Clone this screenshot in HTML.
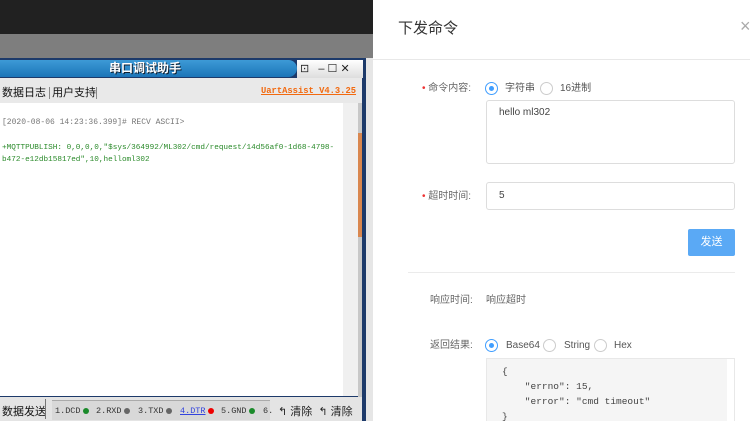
<!DOCTYPE html>
<html><head><meta charset="utf-8"><style>
*{margin:0;padding:0;box-sizing:border-box}
body{width:750px;height:421px;overflow:hidden;position:relative;background:#fff;font-family:"Liberation Sans","Noto Sans CJK SC",sans-serif}
.a{position:absolute;white-space:nowrap}
.mono{font-family:"Liberation Mono","Noto Sans CJK SC",monospace}
.lbl{font-size:10px;color:#666;line-height:13px}
.radio{position:absolute;width:13px;height:13px;border:1px solid #ccc;border-radius:50%;background:#fff}
.radio.on{border-color:#409eff}
.radio.on::after{content:"";position:absolute;left:3px;top:3px;width:5px;height:5px;border-radius:50%;background:#409eff}
.st{font-size:8.5px;color:#333;line-height:10px}
.dot{display:inline-block;width:6px;height:6px;border-radius:50%;vertical-align:middle;margin-left:2px}
</style></head><body>
<div class="a" style="left:0;top:0;width:373px;height:34px;background:#212121"></div>
<div class="a" style="left:0;top:34px;width:373px;height:387px;background:#7e7e7e"></div>
<div class="a" style="left:366px;top:58px;width:7px;height:363px;background:#e6e6e6"></div>
<div class="a" style="left:0;top:58px;width:366px;height:363px;background:#1d3a6a"></div>
<div class="a" style="left:0;top:60px;width:297px;height:17px;background:linear-gradient(#3d9ad6,#1c75b8);border-radius:0 9px 9px 0"></div>
<div class="a" style="left:80px;top:60px;width:130px;height:17px;color:#fff;font-weight:bold;font-size:12px;text-align:center;line-height:17px;text-shadow:1px 1px 0 #123">串口调试助手</div>
<div class="a" style="left:297px;top:60px;width:66px;height:18px;background:linear-gradient(#fff,#ddd)"></div>
<div class="a" style="left:300px;top:60px;font-size:11px;color:#222;line-height:18px">⊡ &nbsp; ‒ ☐ ✕</div>
<div class="a" style="left:0;top:78px;width:362px;height:25px;background:#e9e9e9"></div>
<div class="a" style="left:2px;top:84px;font-size:11px;color:#111">数据日志 <span style="border-left:1px solid #888;padding-left:2px">用户支持</span> <span style="border-left:1px solid #888"></span></div>
<div class="a mono" style="left:261px;top:86px;font-size:8.8px;font-weight:bold;color:#f26a10;text-decoration:underline">UartAssist V4.3.25</div>
<div class="a" style="left:0;top:103px;width:343px;height:293px;background:#fff"></div>
<div class="a" style="left:343px;top:103px;width:15px;height:293px;background:#f0f0f0"></div>
<div class="a" style="left:358px;top:103px;width:4px;height:294px;background:#c8c8c8"></div>
<div class="a" style="left:358px;top:133px;width:4px;height:104px;background:#d9874f"></div>
<div class="a mono" style="left:2px;top:118px;font-size:8px;color:#777">[2020-08-06 14:23:36.399]# RECV ASCII&gt;</div>
<div class="a mono" style="left:2px;top:142px;font-size:7.7px;color:#2a8a2a;line-height:12px">+MQTTPUBLISH: 0,0,0,0,"$sys/364992/ML302/cmd/request/14d56af0-1d68-4798-<br>b472-e12db15817ed",10,helloml302</div>
<div class="a" style="left:0;top:397px;width:362px;height:24px;background:#e4e4e4"></div>
<div class="a" style="left:2px;top:403px;font-size:11px;color:#111">数据发送</div>
<div class="a" style="left:45px;top:399px;width:1px;height:20px;background:#777"></div>
<div class="a" style="left:52px;top:400px;width:218px;height:20px;background:#d8d8d8;border-top:1px solid #aaa"></div>
<div class="a st mono" style="left:55px;top:406px">1.DCD<span class="dot" style="background:#1a8a2a"></span></div>
<div class="a st mono" style="left:96px;top:406px">2.RXD<span class="dot" style="background:#666"></span></div>
<div class="a st mono" style="left:138px;top:406px">3.TXD<span class="dot" style="background:#666"></span></div>
<div class="a st mono" style="left:180px;top:406px"><u style="color:#3344dd">4.DTR</u><span class="dot" style="background:#e00"></span></div>
<div class="a st mono" style="left:221px;top:406px">5.GND<span class="dot" style="background:#1a8a2a"></span></div>
<div class="a st mono" style="left:263px;top:406px">6.</div>
<div class="a" style="left:278px;top:403px;font-size:11px;color:#222">↰ 清除 &nbsp;↰ 清除</div>
<div class="a" style="left:373px;top:0;width:377px;height:421px;background:#fff"></div>
<div class="a" style="left:398px;top:17px;font-size:15px;color:#333">下发命令</div>
<div class="a" style="left:740px;top:16px;font-size:18px;color:#aaa;line-height:20px">×</div>
<div class="a" style="left:373px;top:59px;width:377px;height:1px;background:#e8e8e8"></div>
<div class="a lbl" style="left:422px;top:82px"><span style="color:#e33">•</span> 命令内容:</div>
<div class="radio on" style="left:485px;top:82px"></div>
<div class="a lbl" style="left:505px;top:82px;color:#555">字符串</div>
<div class="radio" style="left:540px;top:82px"></div>
<div class="a lbl" style="left:560px;top:82px;color:#555">16进制</div>
<div class="a" style="left:486px;top:100px;width:249px;height:64px;border:1px solid #ddd;border-radius:3px;font-size:10px;color:#444;padding:6px 12px">hello ml302</div>
<div class="a lbl" style="left:422px;top:190px"><span style="color:#e33">•</span> 超时时间:</div>
<div class="a" style="left:486px;top:182px;width:249px;height:28px;border:1px solid #ddd;border-radius:3px;font-size:10px;color:#444;padding:7px 12px">5</div>
<div class="a" style="left:688px;top:229px;width:47px;height:27px;background:#5aa9f5;border-radius:2px;color:#fff;font-size:11px;text-align:center;line-height:27px">发送</div>
<div class="a" style="left:408px;top:272px;width:327px;height:1px;background:#ebebeb"></div>
<div class="a lbl" style="left:430px;top:294px">响应时间:</div>
<div class="a lbl" style="left:486px;top:294px">响应超时</div>
<div class="a lbl" style="left:430px;top:339px">返回结果:</div>
<div class="radio on" style="left:485px;top:339px"></div>
<div class="a lbl" style="left:506px;top:339px;color:#555">Base64</div>
<div class="radio" style="left:543px;top:339px"></div>
<div class="a lbl" style="left:564px;top:339px;color:#555">String</div>
<div class="radio" style="left:594px;top:339px"></div>
<div class="a lbl" style="left:614px;top:339px;color:#555">Hex</div>
<div class="a" style="left:486px;top:358px;width:249px;height:63px;border:1px solid #e8e8e8;border-bottom:none;background:#fff"></div>
<div class="a" style="left:487px;top:359px;width:240px;height:62px;background:#f5f5f5"></div>
<div class="a mono" style="left:502px;top:364px;font-size:9.5px;color:#444;line-height:15px;white-space:pre">{
    "errno": 15,
    "error": "cmd timeout"
}</div>
</body></html>
